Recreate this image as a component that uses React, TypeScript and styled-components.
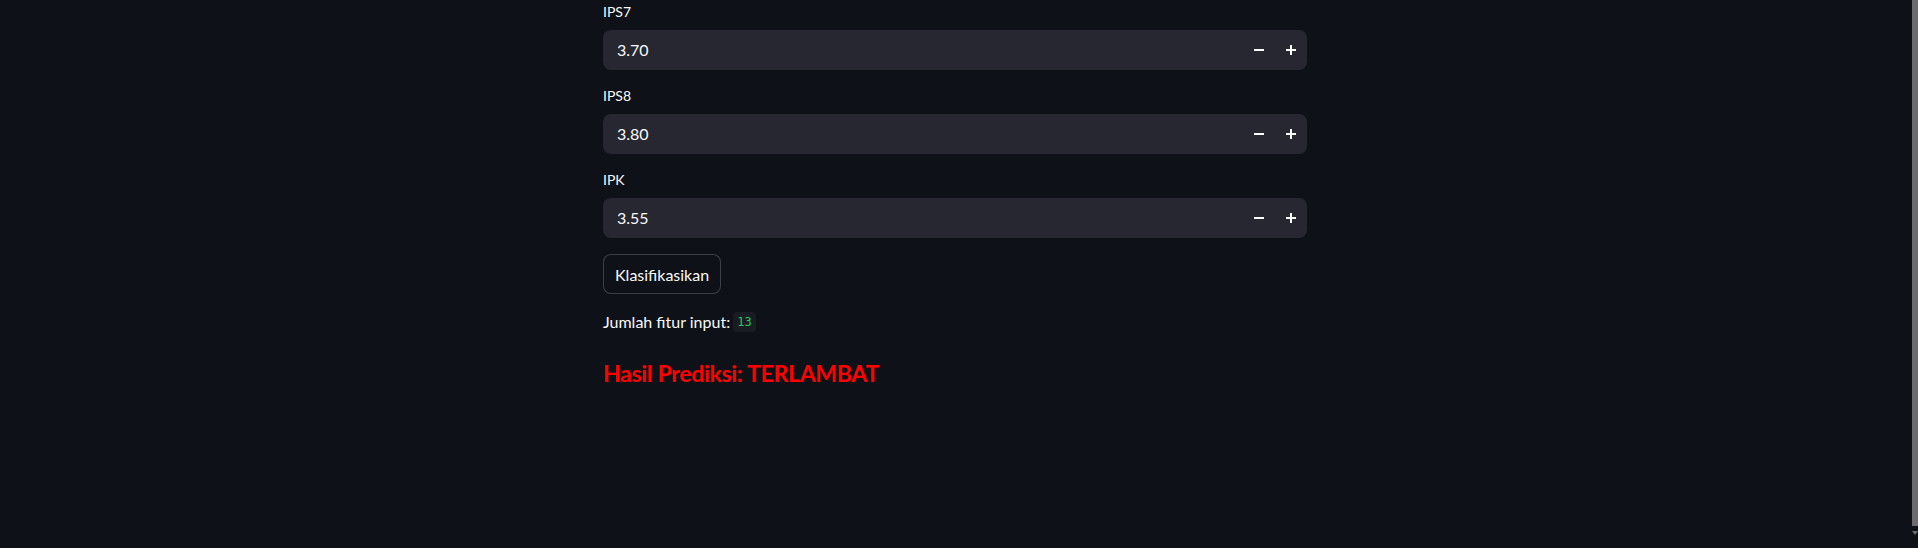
import styled, { createGlobalStyle } from "styled-components";

const GlobalStyle = createGlobalStyle`
  html, body {
    margin: 0;
    padding: 0;
    background: #0e1117;
    overflow: hidden;
  }
  body {
    font-family: "Source Sans Pro", Lato, "Noto Sans", sans-serif;
    color: #fafafa;
  }
`;

const Page = styled.div`
  min-height: 548px;
  padding-right: 8px;
  box-sizing: border-box;
`;

const Main = styled.main`
  width: 704px;
  margin: 0 auto;
  padding-top: 2px;
  display: flex;
  flex-direction: column;
  gap: 16px;
`;

const Field = styled.div`
  display: flex;
  flex-direction: column;
`;

const Label = styled.label`
  font-size: 14px;
  line-height: 20px;
  height: 20px;
  margin-bottom: 8px;
  color: #fafafa;
`;

const InputBox = styled.div`
  display: flex;
  align-items: center;
  height: 40px;
  background: #262730;
  border-radius: 8px;
`;

const Value = styled.input`
  flex: 1;
  min-width: 0;
  height: 100%;
  background: transparent;
  border: none;
  outline: none;
  padding: 0 14px 1px;
  font-family: inherit;
  font-size: 16px;
  color: #fafafa;
`;

const StepButton = styled.button`
  width: 32px;
  height: 40px;
  display: flex;
  align-items: center;
  justify-content: center;
  background: transparent;
  border: none;
  padding: 0;
  color: #fafafa;
  cursor: pointer;
`;

const PrimaryButton = styled.button`
  align-self: flex-start;
  height: 40px;
  padding: 0 11px;
  background: #0e1117;
  color: #fafafa;
  border: 1px solid rgba(250, 250, 250, 0.2);
  border-radius: 8px;
  font-family: inherit;
  font-size: 16px;
`;

const Text = styled.p`
  margin: 0;
  font-size: 16px;
  line-height: 24px;
  display: flex;
  align-items: center;
`;

const Code = styled.code`
  margin-left: 3px;
  padding: 0 4px;
  height: 20px;
  line-height: 20px;
  border-radius: 4px;
  background: #1a1c24;
  color: #28c75a;
  font-family: "DejaVu Sans Mono", monospace;
  font-size: 12px;
`;

const Result = styled.h3`
  margin: 6px 0 0;
  font-size: 23px;
  line-height: 34px;
  font-weight: 700;
  letter-spacing: -0.3px;
  color: #ff0000;
`;

const Scrollbar = styled.div`
  position: fixed;
  top: 0;
  right: 0;
  width: 6px;
  height: 526px;
  background: #6c6c70;
`;

const ScrollArrow = styled.div`
  position: fixed;
  right: 0;
  top: 531px;
  width: 0;
  height: 0;
  border-left: 3px solid transparent;
  border-right: 3px solid transparent;
  border-top: 4px solid #6c6c70;
`;

function Minus() {
  return (
    <svg width="10" height="10" viewBox="0 0 10 10">
      <rect x="0" y="4" width="10" height="2" fill="currentColor" />
    </svg>
  );
}

function Plus() {
  return (
    <svg width="10" height="10" viewBox="0 0 10 10">
      <rect x="0" y="4" width="10" height="2" fill="currentColor" />
      <rect x="4" y="0" width="2" height="10" fill="currentColor" />
    </svg>
  );
}

const fields = [
  { label: "IPS7", value: "3.70" },
  { label: "IPS8", value: "3.80" },
  { label: "IPK", value: "3.55" },
];

export default function App() {
  return (
    <>
      <GlobalStyle />
      <Page>
        <Main>
          {fields.map((f) => (
            <Field key={f.label}>
              <Label>{f.label}</Label>
              <InputBox>
                <Value defaultValue={f.value} />
                <StepButton aria-label="minus">
                  <Minus />
                </StepButton>
                <StepButton aria-label="plus">
                  <Plus />
                </StepButton>
              </InputBox>
            </Field>
          ))}
          <PrimaryButton>Klasifikasikan</PrimaryButton>
          <Text>
            Jumlah fitur input: <Code>13</Code>
          </Text>
          <Result>Hasil Prediksi: TERLAMBAT</Result>
        </Main>
      </Page>
      <Scrollbar />
      <ScrollArrow />
    </>
  );
}
